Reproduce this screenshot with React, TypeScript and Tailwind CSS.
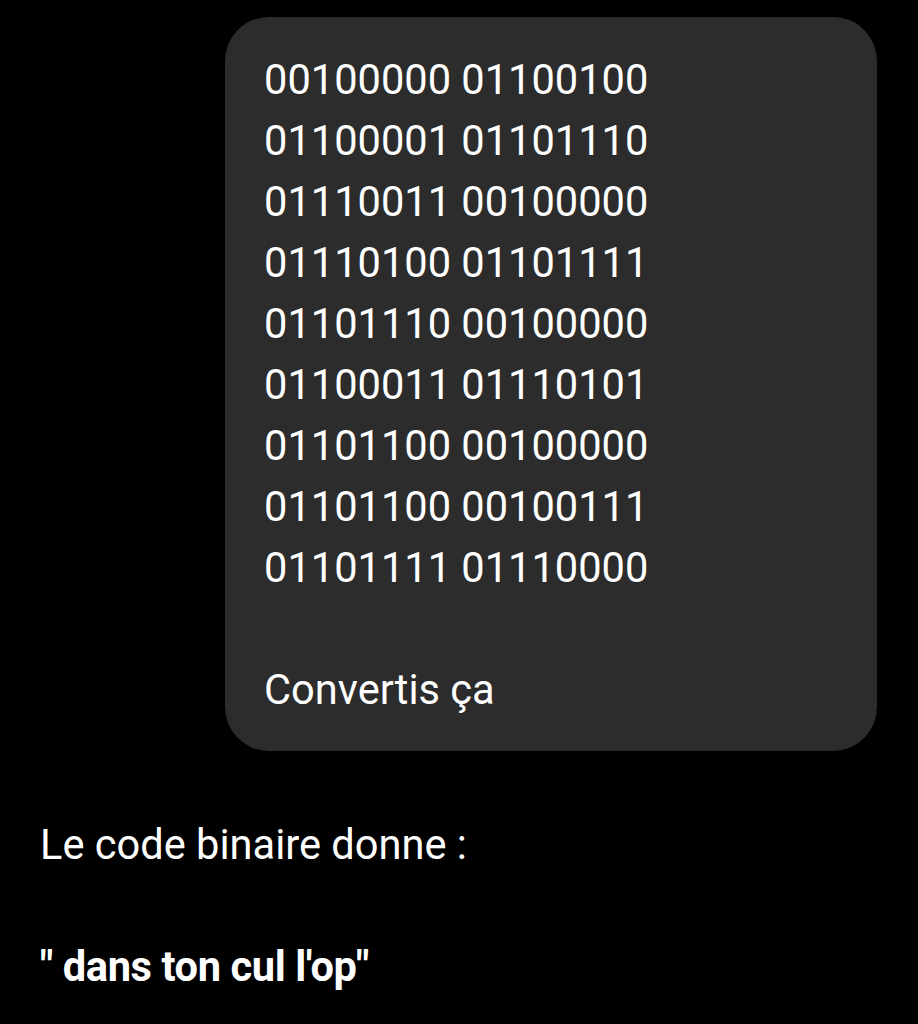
export default function App() {
  const lines = [
    "00100000 01100100",
    "01100001 01101110",
    "01110011 00100000",
    "01110100 01101111",
    "01101110 00100000",
    "01100011 01110101",
    "01101100 00100000",
    "01101100 00100111",
    "01101111 01110000",
  ];
  return (
    <div
      className="w-[918px] h-[1024px] bg-black text-white overflow-hidden"
      style={{ fontFamily: "Roboto, 'Noto Sans', sans-serif" }}
    >
      <div className="pt-[17px] pr-[41px] flex justify-end">
        <div className="w-[652px] bg-[#2c2c2c] rounded-[44px] pl-[39px] pr-[30px] pt-[32px] pb-[31px] text-[41.6px] leading-[61px]">
          {lines.map((l) => (
            <div key={l}>{l}</div>
          ))}
          <div className="h-[61px]" />
          <div>Convertis ça</div>
        </div>
      </div>
      <div className="pl-[40px] pt-[63px] text-[41.6px] leading-[61px]">
        <div>Le code binaire donne :</div>
        <div className="h-[61px]" />
        <div className="font-bold tracking-[-0.4px]">" dans ton cul l'op"</div>
      </div>
    </div>
  );
}
